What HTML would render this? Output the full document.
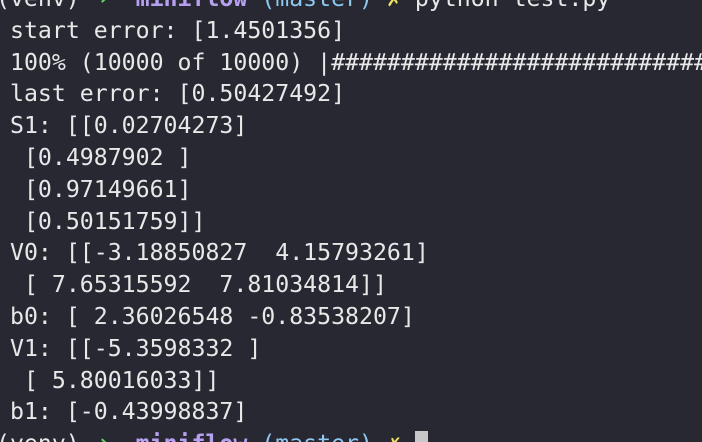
<!DOCTYPE html>
<html><head><style>
html,body{margin:0;padding:0;background:#272832;width:702px;height:442px;overflow:hidden}
#w{position:relative;width:702px;height:442px;overflow:hidden;background:#272832}
pre{margin:0;position:absolute;left:10px;top:-17px;font-family:"DejaVu Sans Mono","Liberation Mono",monospace;font-size:23.2px;line-height:31.8px;color:#e8e8e8;white-space:pre}
.g{color:#5fd35f}.p{color:#b8a0f0;font-weight:bold}.b{color:#8fc8f0}.y{color:#f0e060}
.c{display:inline-block;width:13px;height:24px;background:#c8c8c8;vertical-align:-4px}
</style></head><body><div id="w">
<pre><span style="margin-left:-14px">(venv) </span><span class="g">➜</span>  <span class="p">miniflow</span> <span class="b">(master)</span> <span class="y">✗</span> python test.py
start error: [1.4501356]
100% (10000 of 10000) |###########################
last error: [0.50427492]
S1: [[0.02704273]
 [0.4987902 ]
 [0.97149661]
 [0.50151759]]
V0: [[-3.18850827  4.15793261]
 [ 7.65315592  7.81034814]]
b0: [ 2.36026548 -0.83538207]
V1: [[-5.3598332 ]
 [ 5.80016033]]
b1: [-0.43998837]
<span style="margin-left:-14px">(venv) </span><span class="g">➜</span>  <span class="p">miniflow</span> <span class="b">(master)</span> <span class="y">✗</span> <span class="c"></span></pre>
</div></body></html>
